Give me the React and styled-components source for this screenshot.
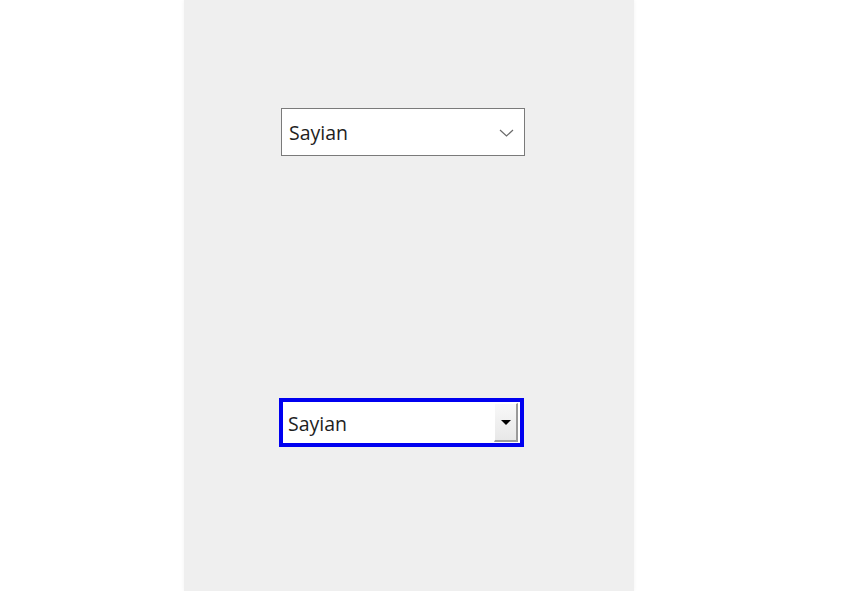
import React from 'react';
import styled, { createGlobalStyle } from 'styled-components';

const GlobalStyle = createGlobalStyle`
  html, body {
    margin: 0;
    padding: 0;
    background: #ffffff;
    font-family: "Open Sans", "Noto Sans", sans-serif;
  }
`;

const Page = styled.div`
  display: flex;
  height: 591px;
  overflow: hidden;
`;

const Panel = styled.div`
  display: flex;
  flex-direction: column;
  width: 450px;
  height: 591px;
  margin-left: 184px;
  background: #efefef;
  box-shadow: 0 0 4px rgba(0, 0, 0, 0.05);
  box-sizing: border-box;
`;

const ModernSelect = styled.div`
  display: flex;
  align-items: center;
  justify-content: space-between;
  box-sizing: border-box;
  width: 244px;
  height: 48px;
  margin: 108px 0 0 97px;
  padding: 2px 10px 0 7px;
  background: #ffffff;
  border: 1px solid #7a7a7a;
  color: #1e1e1e;
  font-size: 19.5px;
`;

const ClassicSelect = styled.div`
  display: flex;
  align-items: stretch;
  box-sizing: border-box;
  width: 245px;
  height: 49px;
  margin: 242px 0 0 95px;
  background: #ffffff;
  border: 4px solid #0000f0;
  color: #1e1e1e;
  font-size: 19.5px;
`;

const Label = styled.span`
  flex: 1;
  display: flex;
  align-items: center;
  padding-left: ${(p) => p.$pad || 0}px;
  padding-top: ${(p) => p.$top || 0}px;
  line-height: 1;
`;

const ArrowButton = styled.div`
  display: flex;
  align-items: center;
  justify-content: center;
  width: 24px;
  margin: 1px 2px 1px 0;
  background: linear-gradient(#f8f8f8, #e8e8e8);
  border-top: 1px solid #ffffff;
  border-left: 1px solid #ffffff;
  border-right: 2px solid #9a9a9a;
  border-bottom: 2px solid #9a9a9a;
  box-sizing: border-box;
`;

const Triangle = styled.span`
  width: 0;
  height: 0;
  border-left: 5px solid transparent;
  border-right: 5px solid transparent;
  border-top: 5px solid #000000;
`;

export default function App() {
  return (
    <>
      <GlobalStyle />
      <Page>
        <Panel>
          <ModernSelect>
            <Label>Sayian</Label>
            <svg width="15" height="8" viewBox="0 0 15 8">
              <path d="M1 1 L7.5 7 L14 1" fill="none" stroke="#6a6a6a" strokeWidth="1.2" />
            </svg>
          </ModernSelect>
          <ClassicSelect>
            <Label $pad={5} $top={2}>Sayian</Label>
            <ArrowButton>
              <Triangle />
            </ArrowButton>
          </ClassicSelect>
        </Panel>
      </Page>
    </>
  );
}
